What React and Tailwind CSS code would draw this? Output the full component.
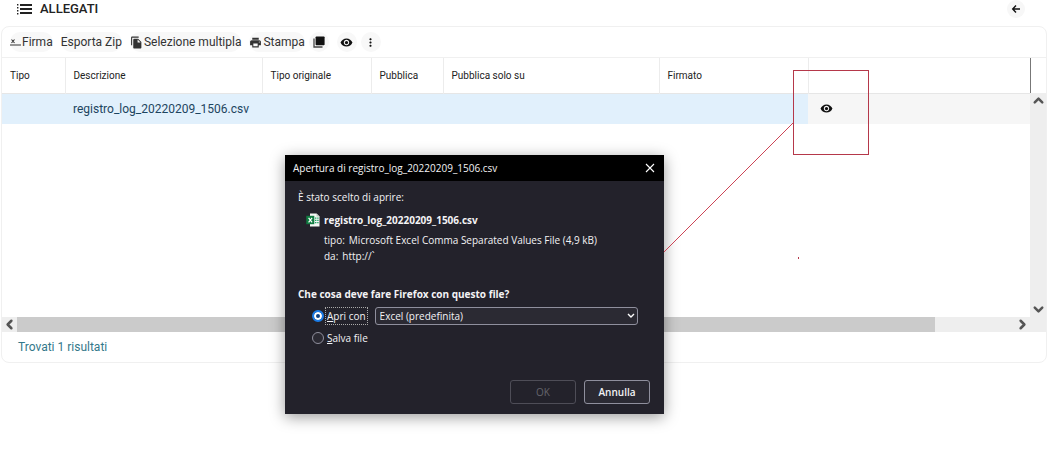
import { useState } from 'react';
import { ChevronDown, ChevronLeft, ChevronRight, ChevronUp } from 'lucide-react';
import { MdFileCopy, MdMoreVert, MdPrint, MdVisibility } from 'react-icons/md';

const columns = [
  { label: 'Tipo', width: 'w-[63px]' },
  { label: 'Descrizione', width: 'w-[197px]' },
  { label: 'Tipo originale', width: 'w-[109px]' },
  { label: 'Pubblica', width: 'w-[72px]' },
  { label: 'Pubblica solo su', width: 'w-[216px]' },
  { label: 'Firmato', width: 'w-[149px]' },
  { label: '', width: '' }
];

const files = [{ id: 1, name: 'registro_log_20220209_1506.csv' }];

function ListIcon() {
  return (
    <svg viewBox="0 0 16 12" className="w-4 h-3" fill="#222" aria-hidden="true">
      <path d="M1 1h1.4v1.4H1zM1 4h1.4v1.4H1zM1 7h1.4v1.4H1zM1 10h1.4v1.4H1z" />
      <path d="M4 1h12v2H4zM4 5h12v2H4zM4 9h12v2H4z" />
    </svg>
  );
}

function BackIcon() {
  return (
    <svg viewBox="0 0 10 10" className="w-[10px] h-[10px]" fill="none" stroke="#111" strokeWidth="1.4" aria-hidden="true">
      <path d="M9 5H2M5 1.5L1.7 5L5 8.5" />
    </svg>
  );
}

function StackIcon() {
  return (
    <svg viewBox="0 0 12 12" className="w-3 h-3" aria-hidden="true">
      <path d="M1 2.5v8.5h8.5" fill="none" stroke="#444" strokeWidth="1.3" />
      <rect x="2.6" y="0.5" width="9" height="8.8" rx="0.8" fill="#111" />
    </svg>
  );
}

function SignIcon() {
  return (
    <svg viewBox="0 0 11 8" className="w-[11px] h-2" fill="none" stroke="#333" aria-hidden="true">
      <path d="M1.5 1.5l3 3.5M4.5 1.5l-3 3.5" strokeWidth="1.1" />
      <path d="M0 7h11" strokeWidth="1.2" />
    </svg>
  );
}

function ExcelIcon() {
  return (
    <svg viewBox="0 0 14 14" className="w-[14px] h-[14px]" aria-hidden="true">
      <path d="M4 0.5h6.5L13.5 3.5v10H4z" fill="#f4f7f4" />
      <path d="M10.5 0.5v3h3z" fill="#b9c9bd" />
      <path d="M9 5.2h1.4M11.2 5.2h1.4M9 7.4h1.4M11.2 7.4h1.4M9 9.6h1.4M11.2 9.6h1.4" stroke="#21a366" strokeWidth="1.3" />
      <rect x="0.3" y="2.8" width="8" height="8.4" fill="#107c41" />
      <path d="M2.6 4.8l3.5 4.5M6.1 4.8L2.6 9.3" stroke="#fff" strokeWidth="1.2" />
    </svg>
  );
}

function ToolbarButton({ label, children, className = '' }) {
  return (
    <button
      type="button"
      aria-label={label}
      className={`flex items-center gap-px h-5 rounded-full bg-[#f8f8f8] text-[#333] ${className}`}
    >
      {children}
    </button>
  );
}

function Toolbar() {
  return (
    <div className="flex items-center h-[31px] pl-2 text-xs border-b border-[#f0f0f0]">
      <ToolbarButton className="mr-2">
        <SignIcon />
        Firma
      </ToolbarButton>
      <ToolbarButton className="mr-2">Esporta Zip</ToolbarButton>
      <ToolbarButton className="mr-2">
        <MdFileCopy size={13} />
        Selezione multipla
      </ToolbarButton>
      <ToolbarButton className="mr-1">
        <MdPrint size={13} />
        Stampa
      </ToolbarButton>
      <ToolbarButton label="Duplica" className="justify-center w-5 mr-2">
        <StackIcon />
      </ToolbarButton>
      <ToolbarButton label="Visualizza" className="justify-center w-5 mr-1">
        <MdVisibility size={13} color="#111" />
      </ToolbarButton>
      <ToolbarButton label="Altro" className="justify-center w-5">
        <MdMoreVert size={13} color="#111" />
      </ToolbarButton>
    </div>
  );
}

function FileTable() {
  return (
    <div className="relative h-[259px]">
      <table className="w-full table-fixed border-collapse text-left">
        <thead>
          <tr className="h-[35px] border-b border-[#e6e6e6]">
            {columns.map((col, i) => (
              <th
                key={i}
                className={`px-2 text-[10px] font-normal text-[#222] ${col.width} ${i < columns.length - 1 ? 'border-r border-[#ececec]' : ''}`}
              >
                {col.label}
              </th>
            ))}
            <th className="w-4 border-l border-[#777]" />
          </tr>
        </thead>
        <tbody>
          {files.map((file) => (
            <tr key={file.id} className="h-[31px] bg-[#e1f0fc]">
              <td />
              <td className="px-2 text-xs text-[#1d4560] whitespace-nowrap">{file.name}</td>
              <td colSpan={4} />
              <td className="bg-[#f6f6f6] pl-3">
                <button type="button" aria-label={`Visualizza ${file.name}`} className="block">
                  <MdVisibility size={13} color="#111" />
                </button>
              </td>
              <td className="bg-[#f6f6f6]" />
            </tr>
          ))}
        </tbody>
      </table>
      <div className="absolute top-[35px] right-0 bottom-0 w-4 flex flex-col items-center justify-between bg-[#eee] text-[#555]">
        <ChevronUp size={15} strokeWidth={4} />
        <ChevronDown size={15} strokeWidth={4} />
      </div>
    </div>
  );
}

function HorizontalScrollbar() {
  return (
    <div className="flex items-center h-[15px] bg-[#eee] text-[#555]">
      <ChevronLeft size={15} strokeWidth={4} />
      <div className="flex-1 h-full">
        <div className="w-[92%] h-full bg-[#cbcbcb]" />
      </div>
      <ChevronRight size={15} strokeWidth={4} className="mr-4" />
    </div>
  );
}

function DialogButton({ children, className = '', ...props }) {
  return (
    <button
      type="button"
      className={`w-[66px] h-6 rounded-[3px] border text-[10px] ${className}`}
      {...props}
    >
      {children}
    </button>
  );
}

function OpenFileDialog() {
  const [action, setAction] = useState('open');
  const radio =
    'appearance-none w-3 h-3 rounded-full border border-[#8f8f9d] bg-[#2b2a33] checked:border-2 checked:border-[#1a7ce8] checked:bg-[#0b3f80] checked:shadow-[inset_0_0_0_2px_#fff]';

  return (
    <div
      role="dialog"
      aria-labelledby="dialog-title"
      className="absolute left-[285px] top-[155px] w-[379px] bg-[#23222b] text-[#f3f3f5] text-[10px] leading-4 shadow-[0_3px_14px_rgba(0,0,0,0.4)] font-['Open_Sans','Noto_Sans',sans-serif]"
    >
      <div className="flex items-center justify-between h-[26px] px-2 bg-black">
        <h2 id="dialog-title">Apertura di registro_log_20220209_1506.csv</h2>
        <button type="button" aria-label="Chiudi" className="p-px">
          <svg viewBox="0 0 10 10" className="w-[10px] h-[10px]" stroke="#fff" strokeWidth="1.1">
            <path d="M1 1l8 8M9 1L1 9" />
          </svg>
        </button>
      </div>

      <div className="px-[13px] pt-2 pb-[10px]">
        <p>È stato scelto di aprire:</p>
        <div className="flex items-center gap-1 mt-[3px] pl-2 h-6 font-bold">
          <ExcelIcon />
          registro_log_20220209_1506.csv
        </div>
        <dl className="pl-[26px]">
          <div className="flex gap-1">
            <dt>tipo:</dt>
            <dd>Microsoft Excel Comma Separated Values File (4,9 kB)</dd>
          </div>
          <div className="flex gap-1">
            <dt>da:</dt>
            <dd>http://&#96;</dd>
          </div>
        </dl>

        <p className="mt-[22px] font-bold">Che cosa deve fare Firefox con questo file?</p>
        <div className="flex items-center mt-1 pl-[14px] h-5">
          <input
            type="radio"
            id="action-open"
            name="action"
            checked={action === 'open'}
            onChange={() => setAction('open')}
            className={radio}
          />
          <label htmlFor="action-open" className="ml-[2px] px-px outline outline-dotted outline-[#aaa]">
            <span className="underline">A</span>pri con
          </label>
          <div className="relative flex-1 ml-2 mr-[13px]">
            <select
              aria-label="Applicazione"
              className="block appearance-none w-full h-[18px] px-1 rounded-[3px] border border-[#8f8f9d] bg-[#2b2a33]"
            >
              <option>Excel (predefinita)</option>
            </select>
            <svg
              viewBox="0 0 8 6"
              className="absolute right-[3px] top-[6px] w-2 h-[6px] pointer-events-none"
              fill="none"
              stroke="#fff"
              strokeWidth="1.4"
            >
              <path d="M1 1l3 3l3-3" />
            </svg>
          </div>
        </div>
        <div className="flex items-center mt-1 pl-[14px] h-4">
          <input
            type="radio"
            id="action-save"
            name="action"
            checked={action === 'save'}
            onChange={() => setAction('save')}
            className={radio}
          />
          <label htmlFor="action-save" className="ml-[3px]">
            <span className="underline">S</span>alva file
          </label>
        </div>

        <div className="flex justify-end gap-2 mt-[34px] pr-px">
          <DialogButton disabled className="border-[#4e4d57] text-[#65646c]">
            OK
          </DialogButton>
          <DialogButton className="border-[#8f8f9d] bg-[#2b2a33] font-semibold">Annulla</DialogButton>
        </div>
      </div>
    </div>
  );
}

// Red box round the row action, with a line that leads to the dialog
function Callout() {
  return (
    <svg
      width="300"
      height="240"
      className="absolute left-[600px] top-[50px] pointer-events-none"
      fill="none"
      stroke="#b5384a"
      shapeRendering="crispEdges"
      aria-hidden="true"
    >
      <rect x="193.5" y="20.5" width="75" height="84" />
      <path d="M193 73L64 202" stroke="#cc4455" />
      <path d="M198.5 207v2" />
    </svg>
  );
}

export default function App() {
  return (
    <div className="relative min-h-screen bg-white font-[Roboto,sans-serif]">
      <header className="flex items-center justify-between h-[26px] pb-2 pl-4 pr-6">
        <h1 className="flex items-center gap-2 text-[13px] font-medium text-[#222]">
          <ListIcon />
          ALLEGATI
        </h1>
        <button
          type="button"
          aria-label="Indietro"
          className="flex items-center justify-center w-[18px] h-[18px] rounded-full bg-[#f7f7f7]"
        >
          <BackIcon />
        </button>
      </header>

      <main className="ml-px mr-[2px] rounded-lg border border-[#f0f0f0] overflow-hidden">
        <Toolbar />
        <FileTable />
        <HorizontalScrollbar />
        <p className="pl-4 text-xs leading-[30px] text-[#33788a]">Trovati 1 risultati</p>
      </main>

      <OpenFileDialog />
      <Callout />
    </div>
  );
}
